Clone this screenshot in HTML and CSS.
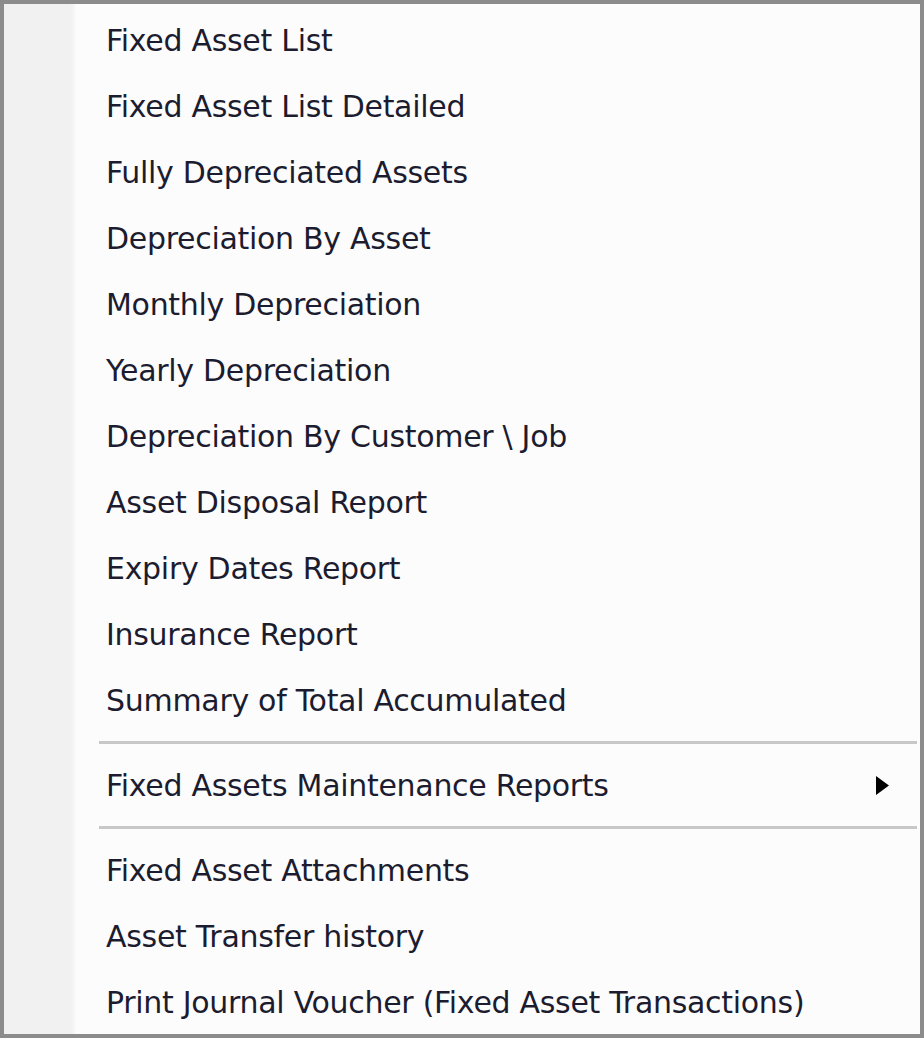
FILE: index.html
```html
<!DOCTYPE html>
<html lang="en">
<head>
    <meta charset="UTF-8">
    <title>Fixed Asset Reports</title>
    <link rel="stylesheet" href="styles.css">
</head>
<body>
<div class="menu">
    <ul class="menu-list">
        <li class="menu-item">Fixed Asset List</li>
        <li class="menu-item">Fixed Asset List Detailed</li>
        <li class="menu-item">Fully Depreciated Assets</li>
        <li class="menu-item">Depreciation By Asset</li>
        <li class="menu-item">Monthly Depreciation</li>
        <li class="menu-item">Yearly Depreciation</li>
        <li class="menu-item">Depreciation By Customer \ Job</li>
        <li class="menu-item">Asset Disposal Report</li>
        <li class="menu-item">Expiry Dates Report</li>
        <li class="menu-item">Insurance Report</li>
        <li class="menu-item">Summary of Total Accumulated</li>
        <li class="menu-sep"></li>
        <li class="menu-item has-sub">
            <span>Fixed Assets Maintenance Reports</span>
            <svg class="sub-arrow" width="15" height="19" viewBox="0 0 15 19"><path d="M1 0 L14 9.5 L1 19 Z" fill="#000"/></svg>
        </li>
        <li class="menu-sep"></li>
        <li class="menu-item">Fixed Asset Attachments</li>
        <li class="menu-item">Asset Transfer history</li>
        <li class="menu-item">Print Journal Voucher (Fixed Asset Transactions)</li>
    </ul>
</div>
</body>
</html>
```

FILE: styles.css
```css
html, body {
    margin: 0;
    padding: 0;
    background: #fcfcfc;
}

.menu {
    width: 924px;
    height: 1038px;
    box-sizing: border-box;
    border: 4px solid #8c8c8c;
    background: linear-gradient(to right, #f1f1f1 0, #f1f1f1 66px, #f6f6f6 70px, #fcfcfc 72px);
    font-family: "DejaVu Sans", sans-serif;
    font-size: 30px;
    letter-spacing: -0.3px;
    color: #1c1c30;
}

.menu-list {
    list-style: none;
    margin: 0;
    padding: 3px 0 0 0;
}

.menu-item {
    height: 66px;
    display: flex;
    align-items: center;
    padding-left: 102px;
    padding-right: 30px;
    white-space: nowrap;
}

.menu-item.has-sub {
    justify-content: space-between;
}

.menu-sep {
    height: 19px;
    margin-left: 95px;
    margin-right: 3px;
    display: flex;
    align-items: center;
}

.menu-sep::after {
    content: "";
    display: block;
    width: 100%;
    height: 3px;
    background: #c8c8c8;
}
```
